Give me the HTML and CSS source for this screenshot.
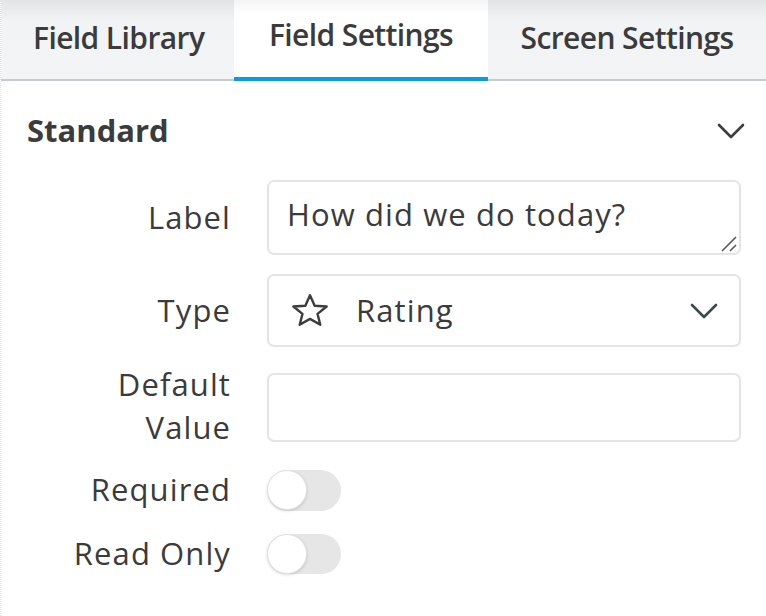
FILE: index.html
```html
<!DOCTYPE html>
<html>
<head>
<meta charset="utf-8">
<link rel="stylesheet" href="styles.css">
</head>
<body>
<div class="panel">
  <div class="tabs">
    <div class="tab tab-lib">Field Library</div>
    <div class="tab tab-active">Field Settings</div>
    <div class="tab tab-screen">Screen Settings</div>
  </div>
  <div class="section">
    <div class="section-head">
      <span class="section-title">Standard</span>
      <svg class="chev" width="26" height="14" viewBox="0 0 26 14" overflow="visible"><path d="M1 1 L13 13 L25 1" fill="none" stroke="#3d3d3d" stroke-width="2.6" stroke-linecap="round" stroke-linejoin="round"/></svg>
    </div>
    <div class="form">
      <div class="label">Label</div>
      <div class="field textarea">
        <span>How did we do today?</span>
        <svg class="grip" width="16" height="16" viewBox="0 0 16 16"><path d="M1 15 L15 1 M9 15 L15 9" stroke="#5a5a5a" stroke-width="1.6"/></svg>
      </div>
      <div class="label">Type</div>
      <div class="field select">
        <svg class="star" width="36" height="32" viewBox="0 0 36 32" overflow="visible"><path d="M18 1.3 L22.64 11.69 L34.64 12.56 L25.51 19.86 L28.29 30.79 L18 24.9 L7.71 30.79 L10.49 19.86 L1.36 12.56 L13.36 11.69 Z" fill="none" stroke="#3d3d3d" stroke-width="2.4" stroke-linejoin="round"/></svg>
        <span class="select-text">Rating</span>
        <svg class="chev-sel" width="26" height="14" viewBox="0 0 26 14" overflow="visible"><path d="M1 1 L13 13 L25 1" fill="none" stroke="#3d4a4a" stroke-width="2.6" stroke-linecap="round" stroke-linejoin="round"/></svg>
      </div>
      <div class="label label-two">Default<br>Value</div>
      <div class="field input"></div>
      <div class="label label-toggle">Required</div>
      <div class="toggle"><div class="knob"></div></div>
      <div class="label label-toggle label-last">Read Only</div>
      <div class="toggle toggle-last"><div class="knob"></div></div>
    </div>
  </div>
</div>
</body>
</html>
```
FILE: styles.css
```css
html, body {
  margin: 0;
  padding: 0;
  background: #fff;
}
body {
  font-family: "Open Sans", "Lato", sans-serif;
  color: #3b3b3b;
  width: 766px;
  height: 616px;
  overflow: hidden;
}
.panel {
  width: 766px;
  height: 616px;
  border-left: 1px dotted #e4e4e4;
  box-sizing: border-box;
}
.tabs {
  display: flex;
  height: 81px;
  box-sizing: border-box;
  border-bottom: 2px solid #c1ccd7;
  background: linear-gradient(#e3e4e6 0px, #f2f3f5 22px, #f3f4f6 100%);
}
.tab {
  display: flex;
  align-items: center;
  justify-content: center;
  font-weight: 600;
  font-size: 30px;
  letter-spacing: -0.6px;
  height: 79px;
  padding-bottom: 5px;
  box-sizing: border-box;
}
.tab-lib { width: 233px; justify-content: flex-start; padding-left: 32px; }
.tab-active {
  width: 254px;
  background: linear-gradient(#f4f4f5 0px, #ffffff 14px);
  border-bottom: 4px solid #0b9be2;
  height: 81px;
  margin-bottom: -2px;
  padding-bottom: 9px;
}
.tab-screen { flex: 1; }
.section {
  padding: 0 22px 0 25px;
}
.section-head {
  display: flex;
  align-items: center;
  justify-content: space-between;
  height: 100px;
}
.section-title {
  font-weight: 700;
  font-size: 31px;
  margin-top: -2px;
  margin-left: 1px;
}
.form {
  display: grid;
  grid-template-columns: 204px 474px;
  column-gap: 37px;
  row-gap: 19px;
  align-items: center;
  margin-top: -1px;
}
.label {
  font-size: 31px;
  text-align: right;
  line-height: 43px;
  letter-spacing: 1.1px;
  margin-right: -1px;
}
.label-two { line-height: 43px; margin-top: -3px; }
.field {
  border: 2px solid #e4e4e4;
  border-radius: 7px;
  box-sizing: border-box;
  background: #fff;
  position: relative;
  display: flex;
  align-items: center;
  font-size: 31px;
  letter-spacing: 1.1px;
}
.textarea {
  height: 75px;
  padding: 0 18px 7px;
}
.grip { position: absolute; right: 2px; bottom: 1px; }
.select {
  height: 73px;
  padding: 0 22px 2px 23px;
}
.star { margin-right: 28px; flex: none; }
.select-text { flex: 1; }
.chev-sel { margin-top: 2px; }
.input { height: 69px; }
.label-toggle { line-height: 42px; margin-top: -2px; }
.label-last { margin-top: 1px; }
.toggle {
  width: 74px;
  height: 41px;
  border-radius: 21px;
  background: #e6e6e6;
  position: relative;
  margin-top: 2px;
}
.toggle-last { margin-top: 4px; height: 40px; }
.knob {
  position: absolute;
  left: 0;
  top: 0;
  width: 40px;
  height: 40px;
  border-radius: 50%;
  background: #fff;
  box-sizing: border-box;
  border: 1px solid #e2e2e2;
  box-shadow: 0 1px 3px rgba(0,0,0,0.15);
}
```
